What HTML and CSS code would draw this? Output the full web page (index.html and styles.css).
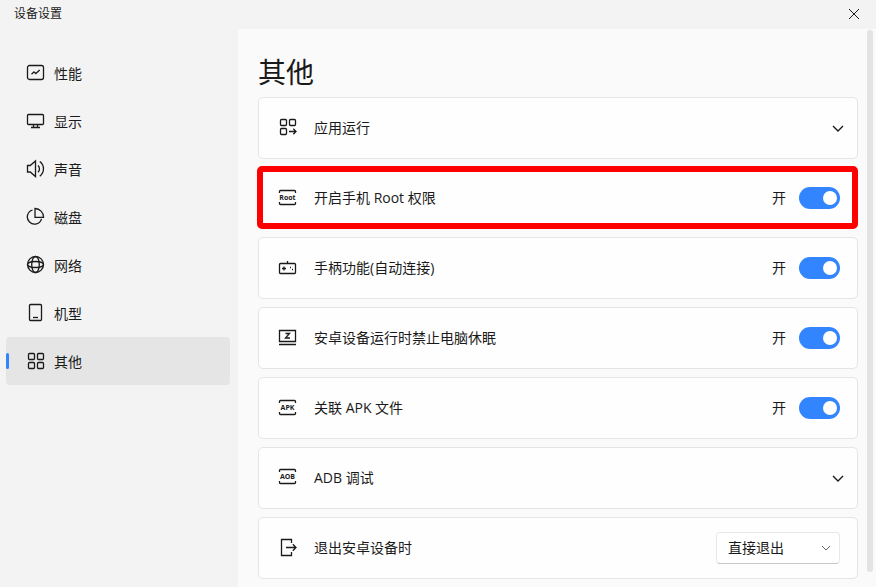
FILE: index.html
```html
<!DOCTYPE html>
<html lang="zh-CN">
<head>
  <meta charset="UTF-8" />
  <meta name="viewport" content="width=device-width, initial-scale=1.0"/>
  <title>设备设置</title>
  <link rel="stylesheet" href="styles.css">
</head>
<body>
  <header class="titlebar">
    <span>设备设置</span>
    <button class="close" aria-label="关闭">
      <svg width="12" height="12" viewBox="0 0 12 12"><path d="M1 1l10 10M11 1L1 11"/></svg>
    </button>
  </header>

  <div class="layout">
    <nav class="sidebar">
      <a href="#performance">
        <svg class="icon" viewBox="0 0 20 20"><rect x="1.5" y="2.5" width="16" height="14" rx="2"/><path d="M5.5 11.3L8 8.8l1.8 1.8L13.7 7"/></svg>
        性能
      </a>
      <a href="#display">
        <svg class="icon" viewBox="0 0 20 20"><rect x="1.5" y="3.5" width="16" height="10" rx="1"/><path d="M7.5 13.5v3M11.5 13.5v3M5 16.5h9"/></svg>
        显示
      </a>
      <a href="#sound">
        <svg class="icon" viewBox="0 0 20 20"><path d="M1.5 6.5h2.7L9.5 2v15.5l-5.3-4.5H1.5zM12 6.5c2 1.8 2 5 0 6.8M13.8 2.5c4.9 3.7 4.9 11 0 14.7"/></svg>
        声音
      </a>
      <a href="#disk">
        <svg class="icon" viewBox="0 0 20 20"><path d="M6.5 3A7.2 7.2 0 1 0 15.5 11.8M9 1.5v8.8h8.5A8.6 8.6 0 0 0 9 1.5z"/></svg>
        磁盘
      </a>
      <a href="#network">
        <svg class="icon" viewBox="0 0 20 20"><circle cx="9.5" cy="9.5" r="8"/><ellipse cx="9.5" cy="9.5" rx="3.8" ry="8"/><ellipse cx="9.5" cy="9.5" rx="8" ry="3"/></svg>
        网络
      </a>
      <a href="#model">
        <svg class="icon" viewBox="0 0 20 20"><rect x="3.5" y="1.5" width="12" height="16" rx="1"/><path d="M7 14.5h5"/></svg>
        机型
      </a>
      <a href="#other" class="active">
        <svg class="icon" viewBox="0 0 20 20"><rect x="2.5" y="2.5" width="6" height="6" rx="1"/><rect x="11.5" y="2.5" width="6" height="6" rx="1"/><rect x="2.5" y="11.5" width="6" height="6" rx="1"/><rect x="11.5" y="11.5" width="6" height="6" rx="1"/></svg>
        其他
      </a>
    </nav>

    <main id="other">
      <h1>其他</h1>

      <div class="card-list">
        <button class="card">
          <svg class="icon" viewBox="0 0 20 20"><rect x="2.5" y="1.5" width="6" height="6" rx="1"/><rect x="11.5" y="1.5" width="6" height="6" rx="1"/><rect x="2.5" y="10.5" width="6" height="6" rx="1"/><path d="M11 13.5h7M15.3 10.8l2.7 2.7-2.7 2.7"/></svg>
          <span class="card-title">应用运行</span>
          <svg class="chevron" viewBox="0 0 12 12"><path d="M1 4l5 5 5-5"/></svg>
        </button>

        <div class="card highlight">
          <svg class="icon" viewBox="0 0 20 20"><path d="M1.5 5V3.5q0-1 1-1h14q1 0 1 1V5M1.5 14v1.5q0 1 1 1h14q1 0 1-1V14"/><text x="9.5" y="12">Root</text></svg>
          <label class="card-title" for="root">开启手机 Root 权限</label>
          <span>开</span>
          <input class="toggle" type="checkbox" id="root" checked>
        </div>

        <div class="card">
          <svg class="icon" viewBox="0 0 20 20"><rect x="1.5" y="5.5" width="16" height="10" rx="1"/><path d="M9.5 3v2.5M4 10.5h4M6 8.5v4M12 9.5h1M14 11.5h1"/></svg>
          <label class="card-title" for="gamepad">手柄功能(自动连接)</label>
          <span>开</span>
          <input class="toggle" type="checkbox" id="gamepad" checked>
        </div>

        <div class="card">
          <svg class="icon" viewBox="0 0 20 20"><path d="M1.5 2.5h16v11h-16zM1 16.5h17M7.5 5.5h4l-4 4.5h4.5"/></svg>
          <label class="card-title" for="sleep">安卓设备运行时禁止电脑休眠</label>
          <span>开</span>
          <input class="toggle" type="checkbox" id="sleep" checked>
        </div>

        <div class="card">
          <svg class="icon" viewBox="0 0 20 20"><path d="M1.5 5V3.5q0-1 1-1h14q1 0 1 1V5M1.5 14v1.5q0 1 1 1h14q1 0 1-1V14"/><text x="9.5" y="12">APK</text></svg>
          <label class="card-title" for="apk">关联 APK 文件</label>
          <span>开</span>
          <input class="toggle" type="checkbox" id="apk" checked>
        </div>

        <button class="card">
          <svg class="icon" viewBox="0 0 20 20"><path d="M1.5 4V2.5q0-1 1-1h14q1 0 1 1V4M1.5 13v1.5q0 1 1 1h14q1 0 1-1V13"/><text x="9.5" y="11">AOB</text></svg>
          <span class="card-title">ADB 调试</span>
          <svg class="chevron" viewBox="0 0 12 12"><path d="M1 4l5 5 5-5"/></svg>
        </button>

        <div class="card">
          <svg class="icon" viewBox="0 0 20 20"><path d="M13.5 5V1.5h-10v16h10V14M8 9.5h10M14.8 6.2L18 9.5l-3.2 3.3"/></svg>
          <label class="card-title" for="exit">退出安卓设备时</label>
          <div class="select">
            <select id="exit">
              <option>直接退出</option>
              <option>每次询问</option>
            </select>
            <svg viewBox="0 0 10 10"><path d="M1 3l4 4 4-4"/></svg>
          </div>
        </div>
      </div>
    </main>

    <div class="scrollbar"></div>
  </div>
</body>
</html>
```
FILE: styles.css
```css
* {
  box-sizing: border-box;
}

body {
  margin: 0;
  min-height: 100vh;
  display: flex;
  flex-direction: column;
  background: #f3f3f3;
  color: #1a1a1a;
  font-family: 'Open Sans', 'Noto Sans CJK SC', sans-serif;
  font-size: 14px;
  line-height: 20px;
}

button,
select {
  font: inherit;
  color: inherit;
}

svg {
  fill: none;
  stroke: #1a1a1a;
  flex: none;
}

.titlebar {
  height: 29px;
  padding: 0 16px 2px 14px;
  display: flex;
  align-items: center;
  justify-content: space-between;
  font-size: 12px;
}

.close {
  display: flex;
  padding: 0;
  border: none;
  background: none;
  cursor: pointer;
}

.layout {
  flex: 1;
  display: flex;
}

/* Sidebar */
.sidebar {
  width: 238px;
  padding: 20px 8px 0 6px;
  flex: none;
}

.sidebar a {
  display: flex;
  align-items: center;
  gap: 8px;
  height: 48px;
  padding: 2px 0 0 20px;
  border-radius: 4px;
  color: inherit;
  text-decoration: none;
}

.sidebar a.active {
  position: relative;
  background: #e5e5e5;
}

.sidebar a.active::before {
  content: '';
  position: absolute;
  left: 0;
  top: 16px;
  width: 3px;
  height: 16px;
  border-radius: 2px;
  background: #3385ff;
}

.icon {
  width: 20px;
  height: 20px;
  stroke-width: 1.3;
}

.sidebar .icon {
  margin-bottom: 2px;
}

.icon text {
  fill: #1a1a1a;
  stroke: none;
  font-size: 7px;
  font-weight: 700;
  text-anchor: middle;
}

/* Content */
main {
  flex: 1;
  padding: 23px 0 8px 20px;
  background: #fafafa;
}

h1 {
  margin: 0 0 5px;
  font-size: 28px;
  line-height: 40px;
  font-weight: 400;
}

.card-list {
  display: flex;
  flex-direction: column;
  gap: 8px;
}

.card {
  position: relative;
  display: flex;
  align-items: center;
  width: 100%;
  height: 62px;
  padding: 0 17px 0 19px;
  border: 1px solid #e5e5e5;
  border-radius: 5px;
  background: #fefefe;
  text-align: left;
}

.card-title {
  flex: 1;
  margin-left: 16px;
}

.card.highlight::after {
  content: '';
  position: absolute;
  inset: -2px -1px -1px -2px;
  border: 6px solid #ff0000;
  border-radius: 5px;
  pointer-events: none;
}

.chevron {
  width: 12px;
  height: 12px;
  margin-right: -4px;
  stroke-width: 1.4;
}

.toggle {
  appearance: none;
  width: 41px;
  height: 22px;
  margin: 0 0 0 13px;
  padding: 4px;
  display: flex;
  border-radius: 11px;
  background: #b5b5b5;
  cursor: pointer;
}

.toggle::before {
  content: '';
  width: 14px;
  height: 14px;
  border-radius: 50%;
  background: #fff;
}

.toggle:checked {
  justify-content: flex-end;
  padding-right: 3px;
  background: #3385ff;
}

.select {
  position: relative;
}

.select select {
  appearance: none;
  display: block;
  width: 124px;
  height: 32px;
  padding: 0 24px 0 11px;
  border: 1px solid #e8e8e8;
  border-bottom-color: #c8c8c8;
  border-radius: 4px;
  background: #fff;
}

.select svg {
  position: absolute;
  right: 9px;
  top: 11px;
  width: 10px;
  height: 10px;
  stroke: #666;
  pointer-events: none;
}

.scrollbar {
  width: 18px;
  padding: 1px 3px 15px 9px;
  background: #fafafa;
  display: flex;
}

.scrollbar::before {
  content: '';
  flex: 1;
  border-radius: 3px;
  background: #e3e3e3;
}
```
